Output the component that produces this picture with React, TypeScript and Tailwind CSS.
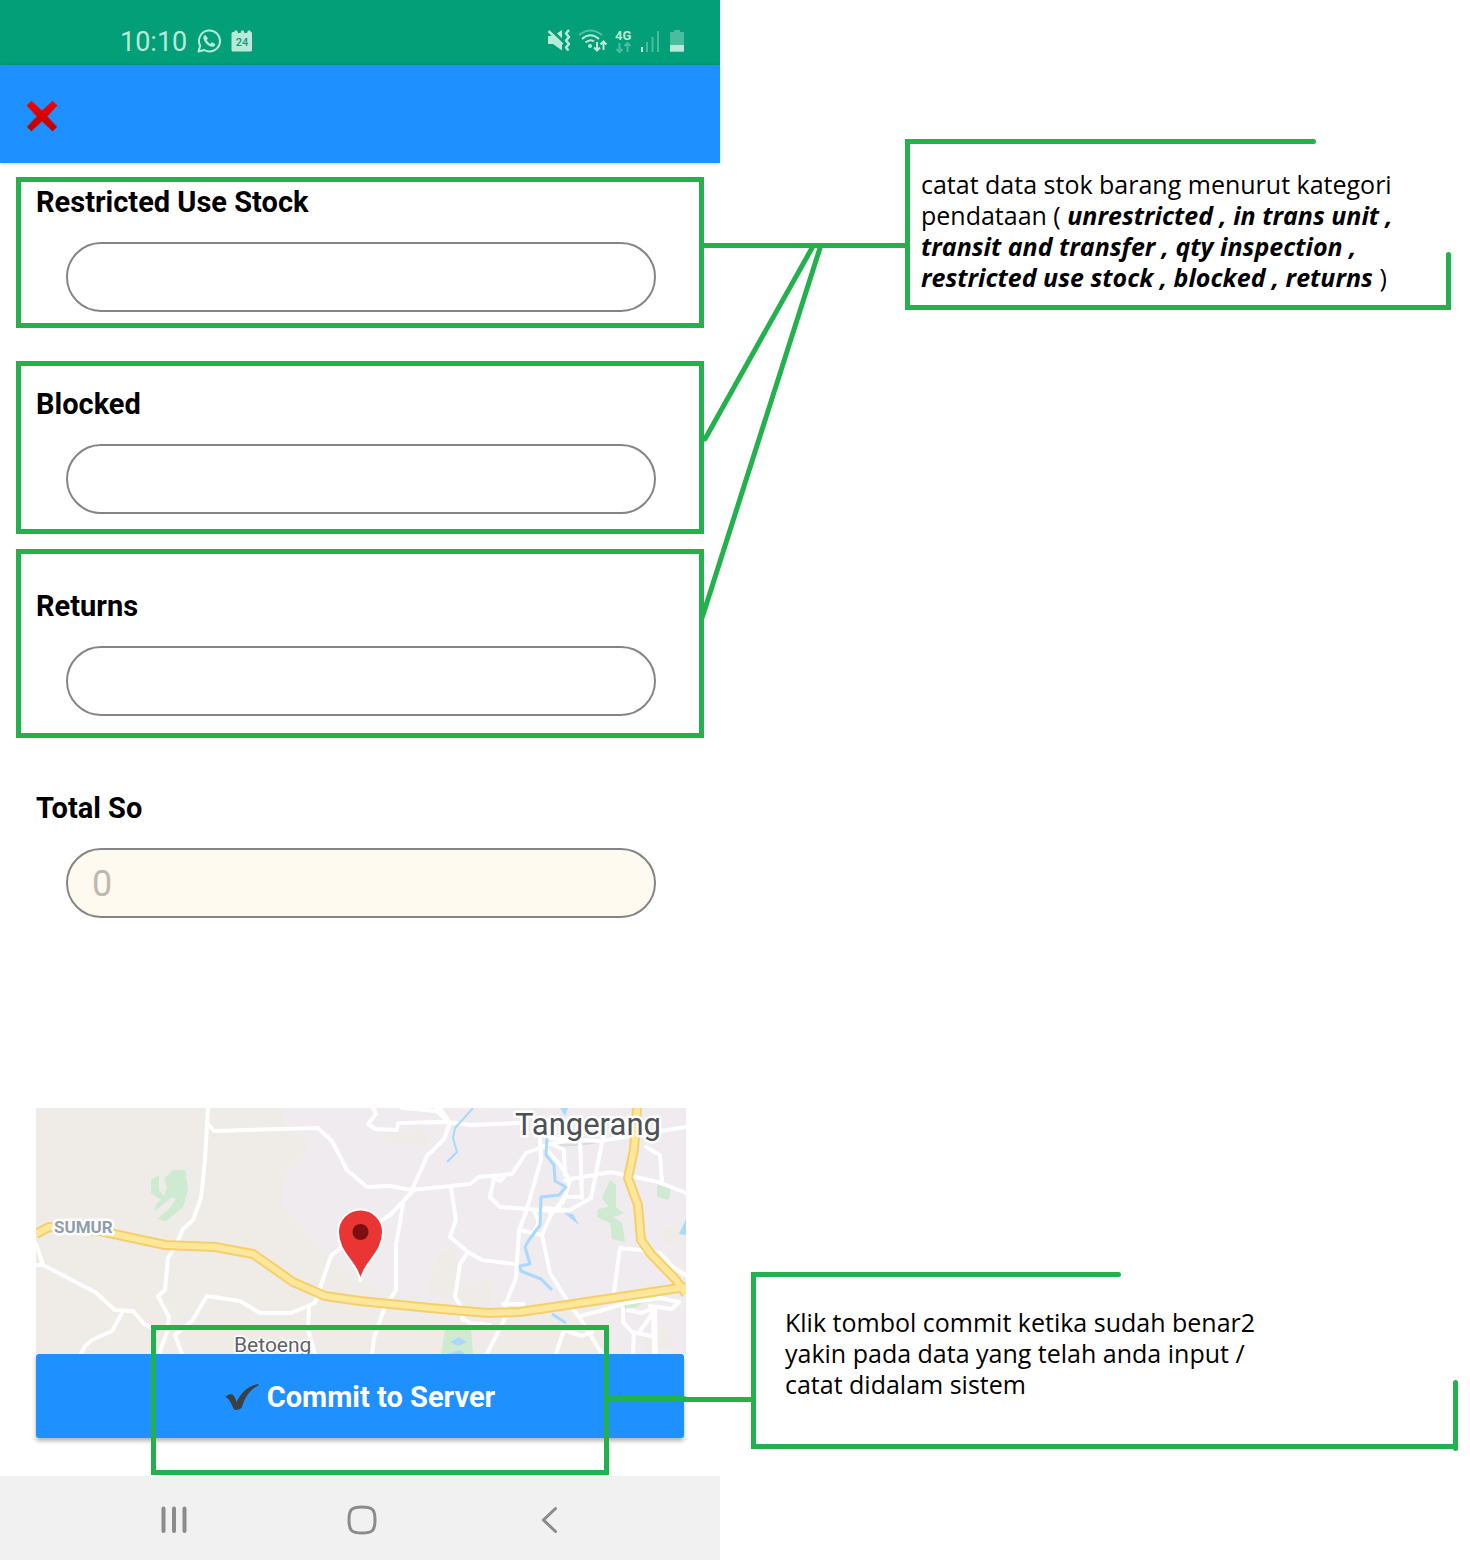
import React from "react";

const roads = [
  "M208 1108 L205 1160 L201 1198 L193 1220 L183 1229 L177 1243 L168 1258 L165 1290 L158 1296 L169 1317 L167 1332 L159 1354",
  "M208 1124 L214 1131 L318 1128 L332 1141 L347 1170 L367 1187 L390 1186 L411 1190 L470 1184 L479 1177 L512 1174 L526 1153 L550 1144 L580 1138",
  "M36 1244 L43 1265 L95 1292 L115 1310 L133 1311 L144 1324 L158 1330",
  "M36 1265 L43 1265",
  "M123 1311 L112 1331 L92 1340 L85 1346 L81 1354",
  "M182 1354 L175 1335 L192 1321 L207 1296 L240 1301 L260 1313 L291 1313 L315 1303 L331 1256 L344 1245 L390 1215 L412 1192",
  "M309 1306 L308 1330 L315 1354",
  "M373 1108 L376 1114 L368 1124 L375 1129 L397 1130 L398 1123 L449 1122 L470 1125 L520 1123",
  "M437 1108 L441 1110 L450 1123 L444 1139 L427 1156 L412 1190",
  "M450 1123 L436 1111 L402 1108",
  "M403 1205 L396 1245 L396 1290 L384 1309 L374 1338 L372 1354",
  "M451 1188 L456 1220 L450 1237 L468 1252 L460 1264 L455 1297 L463 1310 L463 1320",
  "M468 1252 L482 1260 L514 1264",
  "M494 1178 L490 1197 L500 1207 L553 1211 L570 1210 L591 1198 L603 1138",
  "M494 1178 L500 1181 L504 1177",
  "M540 1138 L541 1160 L526 1212 L519 1230 L516 1278 L506 1303 L505 1318 L487 1354",
  "M519 1230 L542 1235 L551 1215 L565 1197 L580 1197",
  "M544 1146 L560 1165 L570 1180 L563 1202 L550 1214",
  "M565 1180 L611 1172 L658 1182 L686 1193",
  "M580 1138 L582 1198 M554 1145 L564 1150 L565 1175",
  "M546 1138 L600 1141 L686 1127",
  "M542 1235 L550 1273 L570 1305 L580 1318 L602 1354",
  "M614 1292 L620 1248 L640 1250 L660 1253 L674 1268 L686 1275",
  "M646 1147 L660 1155 L662 1181",
  "M580 1316 L600 1311 L625 1303 L660 1298 L679 1302 L672 1309 L650 1306",
  "M623 1308 L623 1322 L632 1332 L651 1336 M628 1310 L642 1313 L655 1307 L648 1320 L640 1331 M634 1332 L633 1354",
  "M564 1330 L556 1354 M564 1330 L582 1336 L592 1332",
  "M503 1304 L523 1304 M462 1318 L470 1323 L490 1325",
  "M534 1211 L539 1222 L534 1232 M545 1208 L566 1210",
];

const highways = [
  "M36 1234 L49 1227 L100 1231 L165 1245 L215 1247 L253 1254 L293 1282 L325 1296 L360 1301 L430 1308 L488 1313 L520 1312 L600 1300 L686 1287",
  "M637 1108 L634 1150 L628 1178 L638 1205 L641 1240 L650 1253 L676 1280 L686 1294",
];

function LocationMap() {
  return (
    <svg
      role="img"
      aria-label="Map of Tangerang"
      viewBox="36 1108 650 246"
      preserveAspectRatio="xMidYMid slice"
      className="block h-[246px] w-full"
    >
      <rect x="36" y="1108" width="650" height="246" fill="#efece7" />
      <path
        d="M282 1108 L287 1128 L312 1140 L303 1155 L284 1175 L282 1205 L310 1235 L332 1260 L350 1272 L375 1288 L430 1300 L500 1310 L600 1303 L600 1330 L610 1354 L686 1354 L686 1108 Z"
        fill="#efebef"
      />
      <path
        d="M384 1132 L425 1128 L428 1145 L386 1144 Z M435 1255 L455 1246 L462 1300 L428 1295 Z M462 1283 L496 1278 L490 1310 L462 1305 Z M535 1112 L545 1108 L548 1116 Z M662 1232 L676 1225 L682 1240 L664 1245 Z M640 1340 L670 1325 L672 1345 L650 1354 Z"
        fill="#efece7"
      />
      <path
        d="M151 1180 L159 1175 L159 1190 L164 1196 L167 1187 L164 1179 L173 1170 L185 1170 L188 1190 L183 1207 L166 1221 L157 1219 L169 1209 L176 1199 L172 1197 L155 1211 L156 1204 L161 1200 L151 1193 Z"
        fill="#ceead0"
      />
      <path
        d="M610 1180 L616 1185 L616 1207 L624 1213 L613 1217 L622 1223 L625 1242 L612 1239 L610 1223 L597 1217 L598 1209 L609 1207 L602 1198 Z M657 1185 L671 1188 L669 1200 L657 1197 Z M445 1330 L471 1330 L473 1354 L441 1354 Z M619 1304 L645 1300 L637 1307 L625 1309 Z"
        fill="#ceead0"
      />
      <path
        d="M564 1213 L573 1214 L579 1225 Z M679 1234 L686 1219 L686 1235 Z M450 1342 L459 1337 L467 1342 L458 1346 Z M447 1354 L460 1350 L465 1354 Z M560 1108 L568 1108 L565 1116 Z"
        fill="#a9dafd"
      />
      <path d="M555 1145 Q590 1147 620 1135 L640 1108" fill="none" stroke="#d7dcdd" strokeWidth="2" />
      <g fill="none" stroke="#ffffff" strokeWidth="4" strokeLinejoin="round" strokeLinecap="round">
        {roads.map((d) => (
          <path key={d} d={d} />
        ))}
        <path d="M654 1308 L655 1354" strokeWidth="6" />
      </g>
      <g fill="none" stroke="#a9dafd" strokeWidth="3" strokeLinejoin="round">
        <path d="M473 1108 L455 1128 L453 1138 L457 1152 L447 1162" strokeWidth="2" />
        <path d="M547 1138 L546 1155 L554 1165 L555 1181 L566 1187 L559 1195 L541 1197 L540 1225 L529 1240 L525 1247 L530 1264 L520 1266 L521 1271 L541 1279 L552 1290" />
        <path d="M552 1314 L566 1323" />
      </g>
      <g fill="none" strokeLinejoin="round">
        {highways.map((d) => (
          <path key={d} d={d} stroke="#f5cf6e" strokeWidth="10" />
        ))}
        {highways.map((d) => (
          <path key={d} d={d} stroke="#ffe799" strokeWidth="6" />
        ))}
      </g>
      <g
        fontFamily="Roboto, sans-serif"
        stroke="#ffffff"
        strokeWidth="5"
        strokeLinejoin="round"
        paintOrder="stroke"
      >
        <text x="515" y="1135" fontSize="31" fill="#4d5156">
          Tangerang
        </text>
        <text x="54" y="1233" fontSize="17" fontWeight="700" fill="#8f9dab">
          SUMUR
        </text>
        <text x="234" y="1352" fontSize="21" fill="#5f6368" strokeWidth="3">
          Betoeng
        </text>
      </g>
      <path
        d="M360.500 1282 C358 1262 338 1254 338 1232 A22.500 22.500 0 0 1 383 1232 C383 1254 363 1262 360.500 1282 Z"
        fill="#ea3535"
        stroke="#ffffff"
        strokeWidth="2"
      />
      <circle cx="360.500" cy="1232" r="8" fill="#7d0f10" />
    </svg>
  );
}

function StatusBar() {
  return (
    <div className="flex h-[65px] items-center justify-between bg-[#029f78] pt-[17px] pr-[34px] pl-[120px] text-[#b9ead9]">
      <div className="flex items-center">
        <span className="pt-[2px] text-[27px] leading-8">10:10</span>
        <svg viewBox="0 0 24 24" className="ml-[10px] size-6" fill="none" stroke="currentColor" strokeWidth="2" aria-hidden="true">
          <path d="M1.500 22.500 L3.200 16.800 A10.500 10.500 0 1 1 7.200 21 Z" strokeLinejoin="round" />
          <path
            d="M8.500 6 c-1.800.3-2.600 1.900-1.900 4.100 c1 3.600 4.400 6.900 8 7.600 c2 .4 3.600-.7 3.700-2.500 l-3.200-1.900-1.700 1.500 c-1.600-.6-3-2.200-3.700-3.900 l1.300-1.500z"
            fill="currentColor"
            stroke="none"
          />
        </svg>
        <svg viewBox="0 0 22 22" className="ml-[10px] h-[22px] w-[22px]" aria-hidden="true">
          <path d="M2 2 h1 l1-1.500 h2 l1 2.500 h2.500 l1-2.500 h2 l1 2.500 h2.500 l1-2.500 h2 l1 1.500 a1.500 1.500 0 0 1 1 1.500 V20 a1.500 1.500 0 0 1-1.500 1.500 H2 a1.500 1.500 0 0 1-1.500-1.500 V3.500 A1.500 1.500 0 0 1 2 2z" fill="currentColor" />
          <text x="11" y="16" textAnchor="middle" fontSize="11" fontWeight="500" fontFamily="Roboto, sans-serif" fill="#029f78">
            24
          </text>
        </svg>
      </div>
      <svg viewBox="546 28 140 26" className="h-[26px] w-[140px]" aria-hidden="true">
        <path d="M548 36 h5 l9-6 v20.500 l-9-6.500 h-5z" fill="currentColor" />
        <path d="M550 28.500 L565 43.500" stroke="#029f78" strokeWidth="3" />
        <path d="M548.500 31 L562.500 44.500" stroke="currentColor" strokeWidth="2.500" />
        <path
          d="M569 30 l-3 3.500 3 3.500 -3 3.500 3 3.500 -3 3.500 2.500 3"
          fill="none"
          stroke="currentColor"
          strokeWidth="2.500"
          strokeLinejoin="round"
        />
        <circle cx="590" cy="46" r="2" fill="currentColor" />
        <g fill="none" stroke="currentColor" strokeWidth="2">
          <path d="M579 35 Q590.500 26 602 35" opacity=".45" />
          <path d="M582 39 Q590.500 31.500 599 39" />
          <path d="M585.500 42.500 Q590.500 38.500 594 41.500" />
          <path d="M597 42 v8 M594 47.500 l3 3 3-3 M603.500 50 v-8 M600.500 44.500 l3-3 3 3" />
          <path d="M619.500 43 v9 M616.500 49 l3 3 3-3 M627.500 52 v-9 M624.500 46 l3-3 3 3" opacity=".4" />
        </g>
        <text x="615" y="40" fontSize="13" fontWeight="700" fontFamily="Roboto, sans-serif" fill="currentColor">
          4G
        </text>
        <path d="M641 47 h2 v5 h-2z" fill="currentColor" />
        <path d="M646 42 h2 v10 h-2z M651.500 37 h2 v15 h-2z M657 31 h2 v21 h-2z" fill="currentColor" opacity=".4" />
        <path d="M674 30 h6 v2 h4 v20 h-14 v-20 h4z" fill="currentColor" opacity=".4" />
        <path d="M670 45 h14 v6.500 h-14z" fill="currentColor" />
      </svg>
    </div>
  );
}

type FieldProps = { id: string; label: string; placeholder?: string; disabled?: boolean };

function Field({ id, label, placeholder, disabled }: FieldProps) {
  return (
    <div className="flex flex-col gap-6">
      <label htmlFor={id} className="text-[29px] leading-8 font-bold text-black">
        {label}
      </label>
      <div className="flex pr-7 pl-[30px]">
        <input
          id={id}
          type="text"
          placeholder={placeholder}
          disabled={disabled}
          className="h-[70px] w-full rounded-full border-2 border-[#858585] bg-white px-6 pt-[2px] text-[36px] text-black placeholder:text-[#bdb9ae] disabled:bg-[#fffaf0]"
        />
      </div>
    </div>
  );
}

function Connectors() {
  return (
    <svg
      viewBox="0 0 1470 1560"
      preserveAspectRatio="none"
      className="pointer-events-none absolute inset-0 h-full w-full"
      fill="none"
      stroke="#22b14c"
      strokeWidth="5"
      strokeLinecap="round"
      aria-hidden="true"
    >
      <path d="M704 245.500 H906" />
      <path d="M812 248 L705 439" />
      <path d="M820 248 L702 618" />
      <path d="M611 1398.500 H684 M684 1399.500 H752" />
    </svg>
  );
}

export default function App() {
  return (
    <div className="relative grid min-h-screen grid-cols-[24fr_25fr] bg-white font-[Roboto,sans-serif]">
      <main className="flex flex-col">
        <StatusBar />
        <header className="flex h-[98px] items-center bg-[#1e90ff] px-[26px] pt-1 shadow-[0_1px_4px_rgba(0,0,0,0.2)]">
          <button type="button" aria-label="Close">
            <svg viewBox="0 0 32 32" className="size-8" aria-hidden="true">
              <defs>
                <linearGradient id="cross" x1="0" y1="0" x2="0" y2="1">
                  <stop offset="0" stopColor="#f80000" />
                  <stop offset="1" stopColor="#b80000" />
                </linearGradient>
              </defs>
              <path
                d="M5.500 1 L16 10.500 L26.500 1 L31.300 5.500 L21.300 16.500 L31.300 27 L26.500 31.300 L16 21.500 L5.500 31.300 L0.700 27 L10.700 16.500 L0.700 5.500 Z"
                fill="url(#cross)"
                stroke="#7d4a88"
                strokeWidth="1"
              />
            </svg>
          </button>
        </header>

        <form className="flex flex-col" onSubmit={(e) => e.preventDefault()}>
          <div className="mx-4 mt-[14px] border-5 border-[#22b14c] px-[15px] pt-1 pb-[11px]">
            <Field id="restricted" label="Restricted Use Stock" />
          </div>
          <div className="mx-4 mt-[33px] border-5 border-[#22b14c] px-[15px] pt-[22px] pb-[15px]">
            <Field id="blocked" label="Blocked" />
          </div>
          <div className="mx-4 mt-[15px] border-5 border-[#22b14c] px-[15px] pt-9 pb-[17px]">
            <Field id="returns" label="Returns" />
          </div>
          <div className="mt-[54px] px-9">
            <Field id="total" label="Total So" placeholder="0" disabled />
          </div>

          <div className="relative mt-[190px] pb-[38px]">
            <div className="pr-[34px] pl-9">
              <LocationMap />
            </div>
            <div className="px-9">
              <button
                type="submit"
                className="flex h-[84px] w-full items-center justify-center gap-2 rounded-[3px] bg-[#1e90ff] pt-[2px] text-[29px] leading-8 font-bold text-white shadow-[0_3px_4px_rgba(0,0,0,0.3)]"
              >
                <svg viewBox="0 0 34 28" className="h-7 w-[34px]" aria-hidden="true">
                  <path
                    d="M0.500 14 C2 12 5 10.500 7.500 11.500 C9.500 13 10.500 16 11.500 19 C16 10 23 2.500 33.500 1 C34 1.500 33.500 2.500 32.500 3 C25 7 20 14 16.500 25 C14 27 11 27.300 9 26.500 C7 22 4 15 0.500 14 Z"
                    fill="#3c4043"
                  />
                </svg>
                <span>Commit to Server</span>
              </button>
            </div>
            <div className="pointer-events-none absolute right-[15.4%] bottom-px left-[21%] h-[150px] border-5 border-[#22b14c]" />
          </div>
        </form>

        <nav className="flex h-[84px] items-center justify-between bg-[#f1f1f1] pt-[3px] pr-[162px] pl-[161px] text-[#8b8b8b]">
          <button type="button" aria-label="Recent apps">
            <svg viewBox="0 0 26 28" className="h-7 w-[26px]" stroke="currentColor" strokeWidth="4" strokeLinecap="round" aria-hidden="true">
              <path d="M2.500 2.500 V25 M13 2.500 V25 M23.500 2.500 V25" />
            </svg>
          </button>
          <button type="button" aria-label="Home" className="pr-1">
            <svg viewBox="0 0 30 30" className="size-[30px]" fill="none" stroke="currentColor" strokeWidth="3" aria-hidden="true">
              <path d="M15 2 C25.500 2 28 4.500 28 15 C28 25.500 25.500 28 15 28 C4.500 28 2 25.500 2 15 C2 4.500 4.500 2 15 2 Z" />
            </svg>
          </button>
          <button type="button" aria-label="Back">
            <svg viewBox="0 0 18 28" className="h-7 w-[18px]" fill="none" stroke="currentColor" strokeWidth="3" strokeLinecap="round" aria-hidden="true">
              <path d="M15.500 2.500 L3.500 14 L15.500 25.500" />
            </svg>
          </button>
        </nav>
      </main>

      <aside className="flex flex-col font-['Open_Sans',sans-serif] text-[25px] leading-[31px] text-black">
        <section className="relative mt-[139px] mr-[19px] ml-[185px] border-b-5 border-l-5 border-[#22b14c] pt-[30px] pb-3 pl-[11px]">
          <span className="absolute top-0 left-0 h-[5px] w-3/4 rounded-r-sm bg-[#22b14c]" />
          <span className="absolute right-0 bottom-0 h-[53px] w-[5px] rounded-t-sm bg-[#22b14c]" />
          <p className="whitespace-nowrap">
            catat data stok barang menurut kategori
            <br />
            pendataan ( <b className="italic">unrestricted , in trans unit ,</b>
            <br />
            <b className="italic">transit and transfer , qty inspection ,</b>
            <br />
            <b className="italic">restricted use stock , blocked , returns</b> )
          </p>
        </section>
        <section className="relative mt-[962px] mr-3 ml-[31px] border-b-5 border-l-5 border-[#22b14c] pt-[35px] pb-11 pl-[29px]">
          <span className="absolute top-0 left-0 h-[5px] w-[52%] rounded-r-sm bg-[#22b14c]" />
          <span className="absolute right-0 -bottom-[7px] h-[71px] w-[5px] rounded-sm bg-[#22b14c]" />
          <p className="whitespace-nowrap">
            Klik tombol commit ketika sudah benar2
            <br />
            yakin pada data yang telah anda input /
            <br />
            catat didalam sistem
          </p>
        </section>
      </aside>
      <Connectors />
    </div>
  );
}
